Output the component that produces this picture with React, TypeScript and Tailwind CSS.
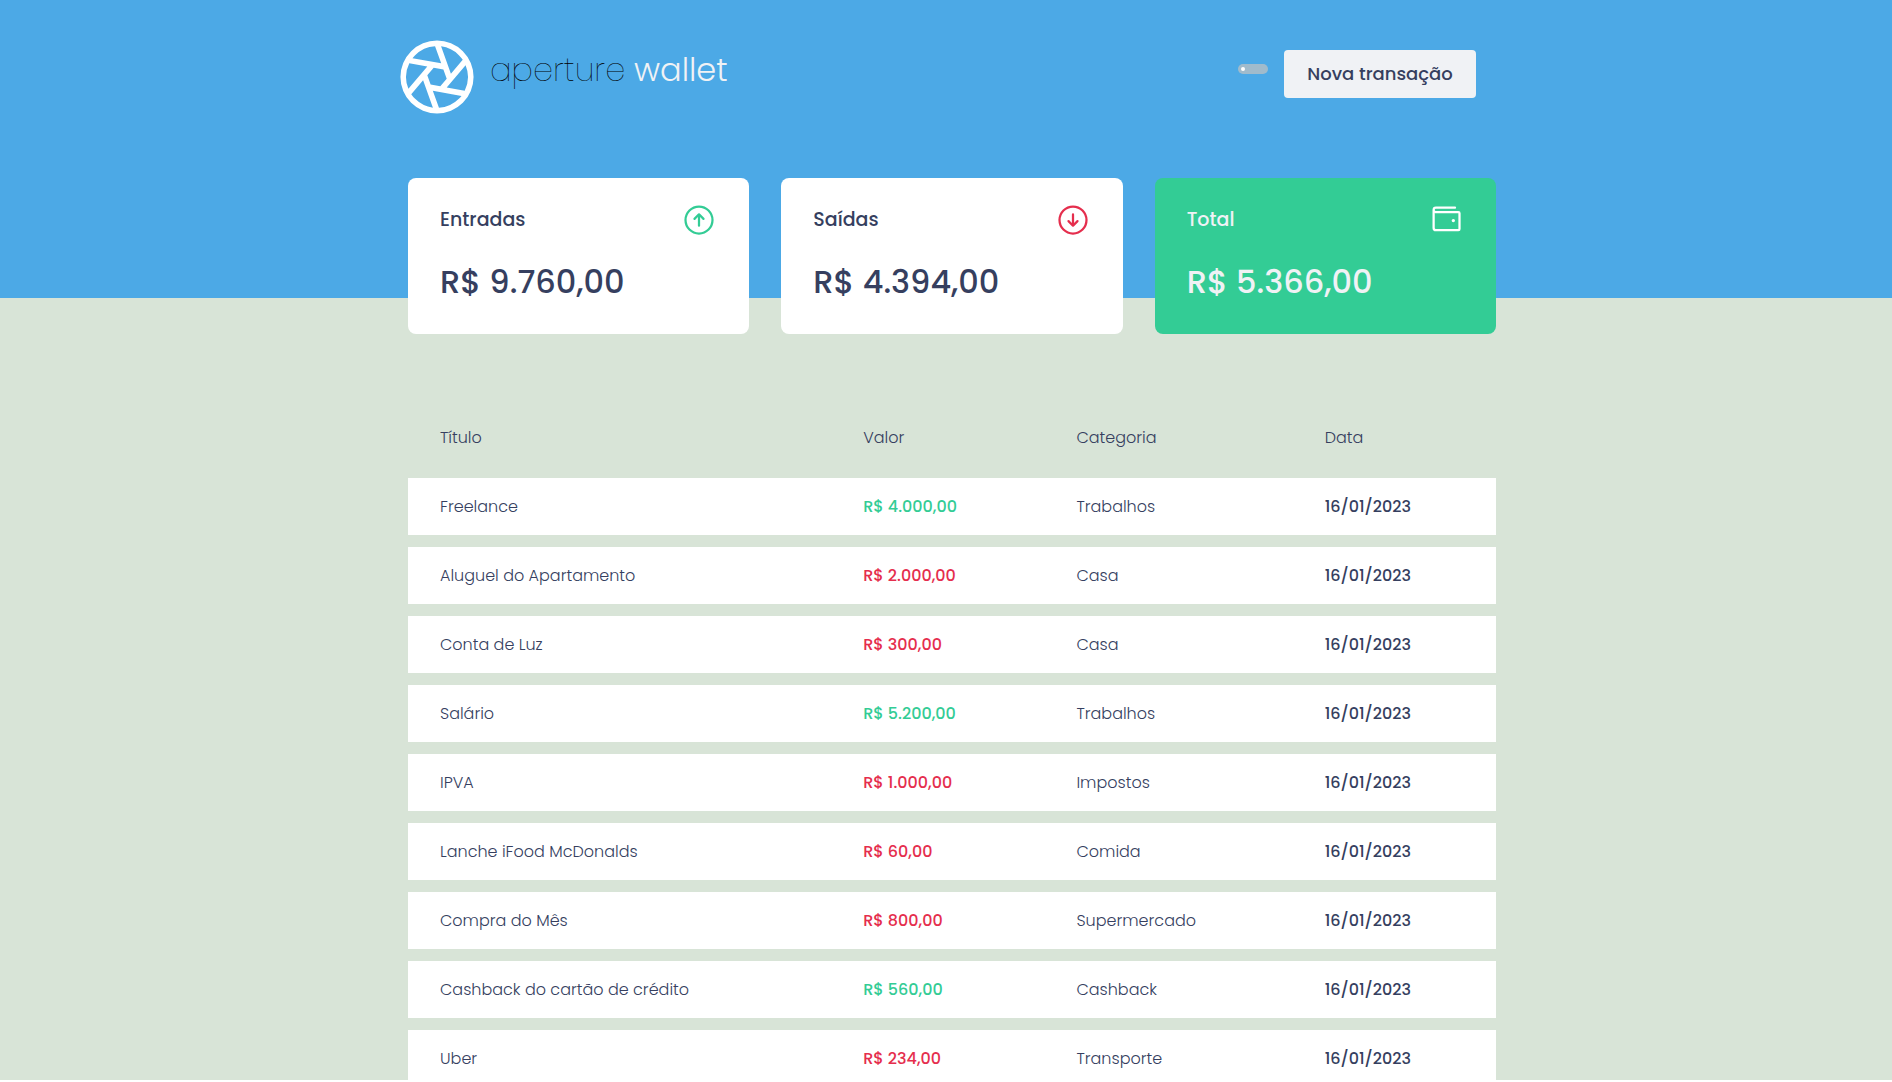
import { PiAperture, PiArrowCircleUp, PiArrowCircleDown, PiWallet } from "react-icons/pi";
import type { ReactNode } from "react";

type Transaction = {
  title: string;
  value: string;
  income?: boolean;
  category: string;
  date: string;
};

const transactions: Transaction[] = [
  { title: "Freelance", value: "R$ 4.000,00", income: true, category: "Trabalhos", date: "16/01/2023" },
  { title: "Aluguel do Apartamento", value: "R$ 2.000,00", category: "Casa", date: "16/01/2023" },
  { title: "Conta de Luz", value: "R$ 300,00", category: "Casa", date: "16/01/2023" },
  { title: "Salário", value: "R$ 5.200,00", income: true, category: "Trabalhos", date: "16/01/2023" },
  { title: "IPVA", value: "R$ 1.000,00", category: "Impostos", date: "16/01/2023" },
  { title: "Lanche iFood McDonalds", value: "R$ 60,00", category: "Comida", date: "16/01/2023" },
  { title: "Compra do Mês", value: "R$ 800,00", category: "Supermercado", date: "16/01/2023" },
  { title: "Cashback do cartão de crédito", value: "R$ 560,00", income: true, category: "Cashback", date: "16/01/2023" },
  { title: "Uber", value: "R$ 234,00", category: "Transporte", date: "16/01/2023" },
];

function Header() {
  return (
    <header className="bg-[#4ca9e6] pb-44 pl-3">
      <div className="mx-auto flex max-w-[1120px] items-start justify-between pt-8 pr-9">
        <a href="#" className="flex items-start">
          <PiAperture className="size-[90px] text-white" aria-hidden="true" />
          <h1 className="mt-4 ml-2 text-[32px] leading-[44px] font-extralight text-black">
            aperture<span className="font-light text-[#f0f2f5]"> wallet</span>
          </h1>
        </a>
        <div className="flex items-start gap-4 pt-[18px]">
          <input
            type="checkbox"
            role="switch"
            aria-label="Alternar tema"
            className="mt-3.5 flex h-[10px] w-[30px] appearance-none items-center rounded-full bg-[#a0bbcc] pl-[3px] before:size-1 before:rounded-full before:bg-white"
          />
          <button type="button" className="h-12 w-48 rounded bg-[#f0f2f5] text-lg font-medium">
            Nova transação
          </button>
        </div>
      </div>
    </header>
  );
}

function SummaryCard({ label, value, icon, highlight }: { label: string; value: string; icon: ReactNode; highlight?: boolean }) {
  return (
    <section
      className={
        highlight
          ? "rounded-lg bg-[#33cc95] px-8 pt-6 pb-7 font-medium text-[#f0f2f5]"
          : "rounded-lg bg-white px-8 pt-6 pb-7 font-medium"
      }
    >
      <div className="flex items-center justify-between">
        <h2 className="text-[19px] leading-[30px]">{label}</h2>
        {icon}
      </div>
      <strong className="mt-5 block text-[32px] leading-[48px] font-medium">{value}</strong>
    </section>
  );
}

export default function App() {
  return (
    <div className="h-[calc(100vh-2px)] overflow-hidden bg-[#d8e4d7] font-['Poppins','Inter',sans-serif] text-[#363f5f]">
      <Header />
      <main className="pl-3">
        <div className="mx-auto max-w-[1120px] px-4">
          <div className="-mt-[120px] grid grid-cols-3 gap-8">
            <SummaryCard label="Entradas" value="R$ 9.760,00" icon={<PiArrowCircleUp className="size-9 text-[#33cc95]" />} />
            <SummaryCard label="Saídas" value="R$ 4.394,00" icon={<PiArrowCircleDown className="size-9 text-[#e52e4d]" />} />
            <SummaryCard label="Total" value="R$ 5.366,00" highlight icon={<PiWallet className="size-9 text-white" />} />
          </div>
          <table className="mt-16 w-full border-separate border-spacing-x-0 border-spacing-y-3 text-left text-base">
            <thead>
              <tr className="h-14">
                <th className="px-8 font-light">Título</th>
                <th className="px-8 font-light">Valor</th>
                <th className="px-8 font-light">Categoria</th>
                <th className="px-8 font-light">Data</th>
              </tr>
            </thead>
            <tbody>
              {transactions.map((t) => (
                <tr key={t.title} className="h-[57px] bg-white">
                  <td className="px-8 font-light">{t.title}</td>
                  <td className={t.income ? "px-8 font-medium text-[#33cc95]" : "px-8 font-medium text-[#e52e4d]"}>{t.value}</td>
                  <td className="px-8 font-light">{t.category}</td>
                  <td className="px-8 font-medium">{t.date}</td>
                </tr>
              ))}
            </tbody>
          </table>
        </div>
      </main>
    </div>
  );
}
